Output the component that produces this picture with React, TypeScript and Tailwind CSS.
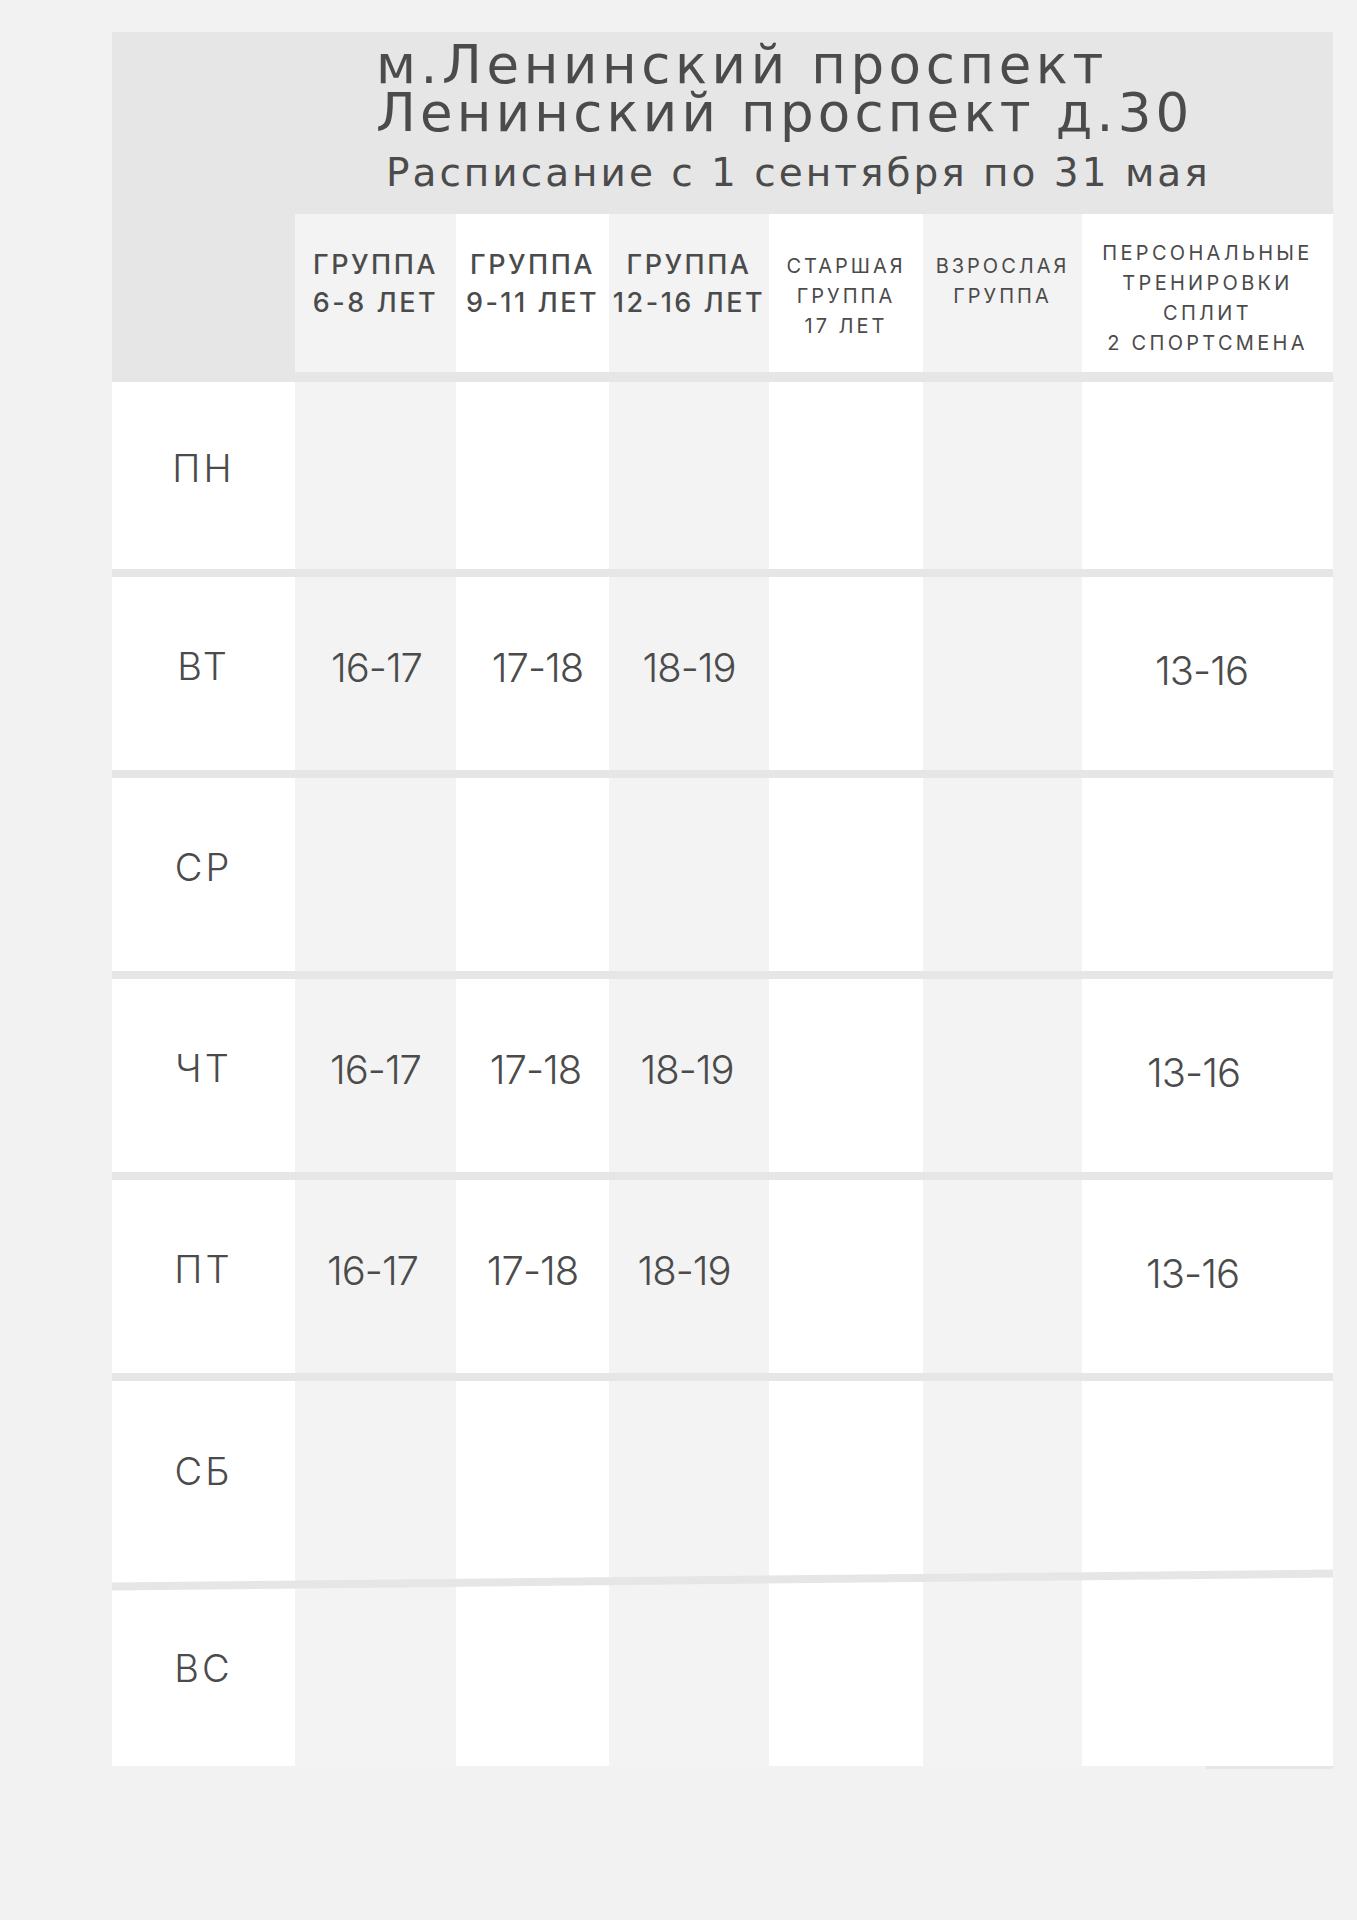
import React from "react";

const cols = [
  { w: "w-[161px]", bg: "bg-[#f2f3f2]" },
  { w: "w-[153px]", bg: "bg-white" },
  { w: "w-[160px]", bg: "bg-[#f2f3f2]" },
  { w: "w-[154px]", bg: "bg-white" },
  { w: "w-[159px]", bg: "bg-[#f2f3f2]" },
  { w: "flex-1", bg: "bg-white" },
];

type Day = { day: string; h: string; times: string[]; shift?: string[] };

const days: Day[] = [
  { day: "ПН", h: "h-[187px]", times: [] },
  {
    day: "ВТ",
    h: "h-[193px]",
    times: ["16-17", "17-18", "18-19", "", "", "13-16"],
    shift: ["translate-x-[1px]", "translate-x-[5px]", "", "", "", "-translate-x-[6px] translate-y-[3px]"],
  },
  { day: "СР", h: "h-[193px]", times: [] },
  {
    day: "ЧТ",
    h: "h-[193px]",
    times: ["16-17", "17-18", "18-19", "", "", "13-16"],
    shift: ["", "translate-x-[3px]", "-translate-x-[2px]", "", "", "-translate-x-[14px] translate-y-[3px]"],
  },
  {
    day: "ПТ",
    h: "h-[193px]",
    times: ["16-17", "17-18", "18-19", "", "", "13-16"],
    shift: ["-translate-x-[3px]", "", "-translate-x-[5px]", "", "", "-translate-x-[15px] translate-y-[3px]"],
  },
  { day: "СБ", h: "h-[195px]", times: [] },
];

function Row({ day, h, times, shift = [] }: Day) {
  return (
    <div className={`flex ${h}`}>
      <div className="w-[183px] bg-white flex items-center justify-center pb-[14px] text-[38px] font-light tracking-[3px]">
        {day}
      </div>
      {cols.map((c, i) => (
        <div
          key={i}
          className={`${c.w} ${c.bg} flex items-center justify-center pb-[12px] text-[40px] font-light tracking-[-1px]`}
        >
          <span className={shift[i] || ""}>{times[i] || ""}</span>
        </div>
      ))}
    </div>
  );
}

export default function App() {
  return (
    <div className="min-h-[1920px] bg-[#f1f2f1] pt-8 pl-[112px] text-[#4b4b4b] font-['Inter',sans-serif]">
      <div className="w-[1221px]">
        {/* header block */}
        <div className="bg-[#e6e6e6] h-[350px] flex flex-col">
          <div className="h-[182px] pl-[264px] pt-[9px] font-['DejaVu_Sans',sans-serif] whitespace-nowrap">
            <div className="text-[53px] leading-[48px] tracking-[4.6px]">м.Ленинский проспект</div>
            <div className="text-[53px] leading-[48px] tracking-[4.2px]">Ленинский проспект д.30</div>
            <div className="text-[39px] leading-[48px] tracking-[3px] mt-[12px] ml-[10px]">
              Расписание с 1 сентября по 31 мая
            </div>
          </div>
          <div className="flex pl-[183px] h-[158px] text-center uppercase whitespace-nowrap">
            <div className={`${cols[0].w} ${cols[0].bg} pt-[32px] text-[27px] leading-[38px] font-medium tracking-[2.5px]`}>
              Группа<br />6-8 лет
            </div>
            <div className={`${cols[1].w} ${cols[1].bg} pt-[32px] text-[27px] leading-[38px] font-medium tracking-[2.5px]`}>
              Группа<br />9-11 лет
            </div>
            <div className={`${cols[2].w} ${cols[2].bg} pt-[32px] text-[27px] leading-[38px] font-medium tracking-[2.5px]`}>
              Группа<br />12-16 лет
            </div>
            <div className={`${cols[3].w} ${cols[3].bg} pt-[37px] text-[20px] leading-[30px] tracking-[3px]`}>
              Старшая<br />группа<br />17 лет
            </div>
            <div className={`${cols[4].w} ${cols[4].bg} pt-[37px] text-[20px] leading-[30px] tracking-[3px]`}>
              Взрослая<br />группа
            </div>
            <div className={`${cols[5].w} ${cols[5].bg} pt-[24px] text-[20px] leading-[30px] tracking-[3.3px]`}>
              Персональные<br />тренировки<br />сплит<br />2 спортсмена
            </div>
          </div>
        </div>

        {days.map((d, i) => (
          <React.Fragment key={d.day}>
            <Row {...d} />
            {i < days.length - 1 && <div className="h-[8px] bg-[#e6e6e6]" />}
          </React.Fragment>
        ))}

        {/* slanted divider between СБ and ВС */}
        <div className="relative flex h-[8px]">
          <div className="w-[183px] bg-white" />
          {cols.map((c, i) => (
            <div key={i} className={`${c.w} ${c.bg}`} />
          ))}
          <div className="absolute inset-x-0 top-0 z-10 h-[8px] bg-[#e6e6e6] -rotate-[0.6deg]" />
        </div>
        <Row day="ВС" h="h-[182px]" times={[]} />
        <div className="flex justify-end">
          <div className="w-[127px] h-[3px] bg-[#e6e6e6]" />
        </div>
      </div>
    </div>
  );
}
